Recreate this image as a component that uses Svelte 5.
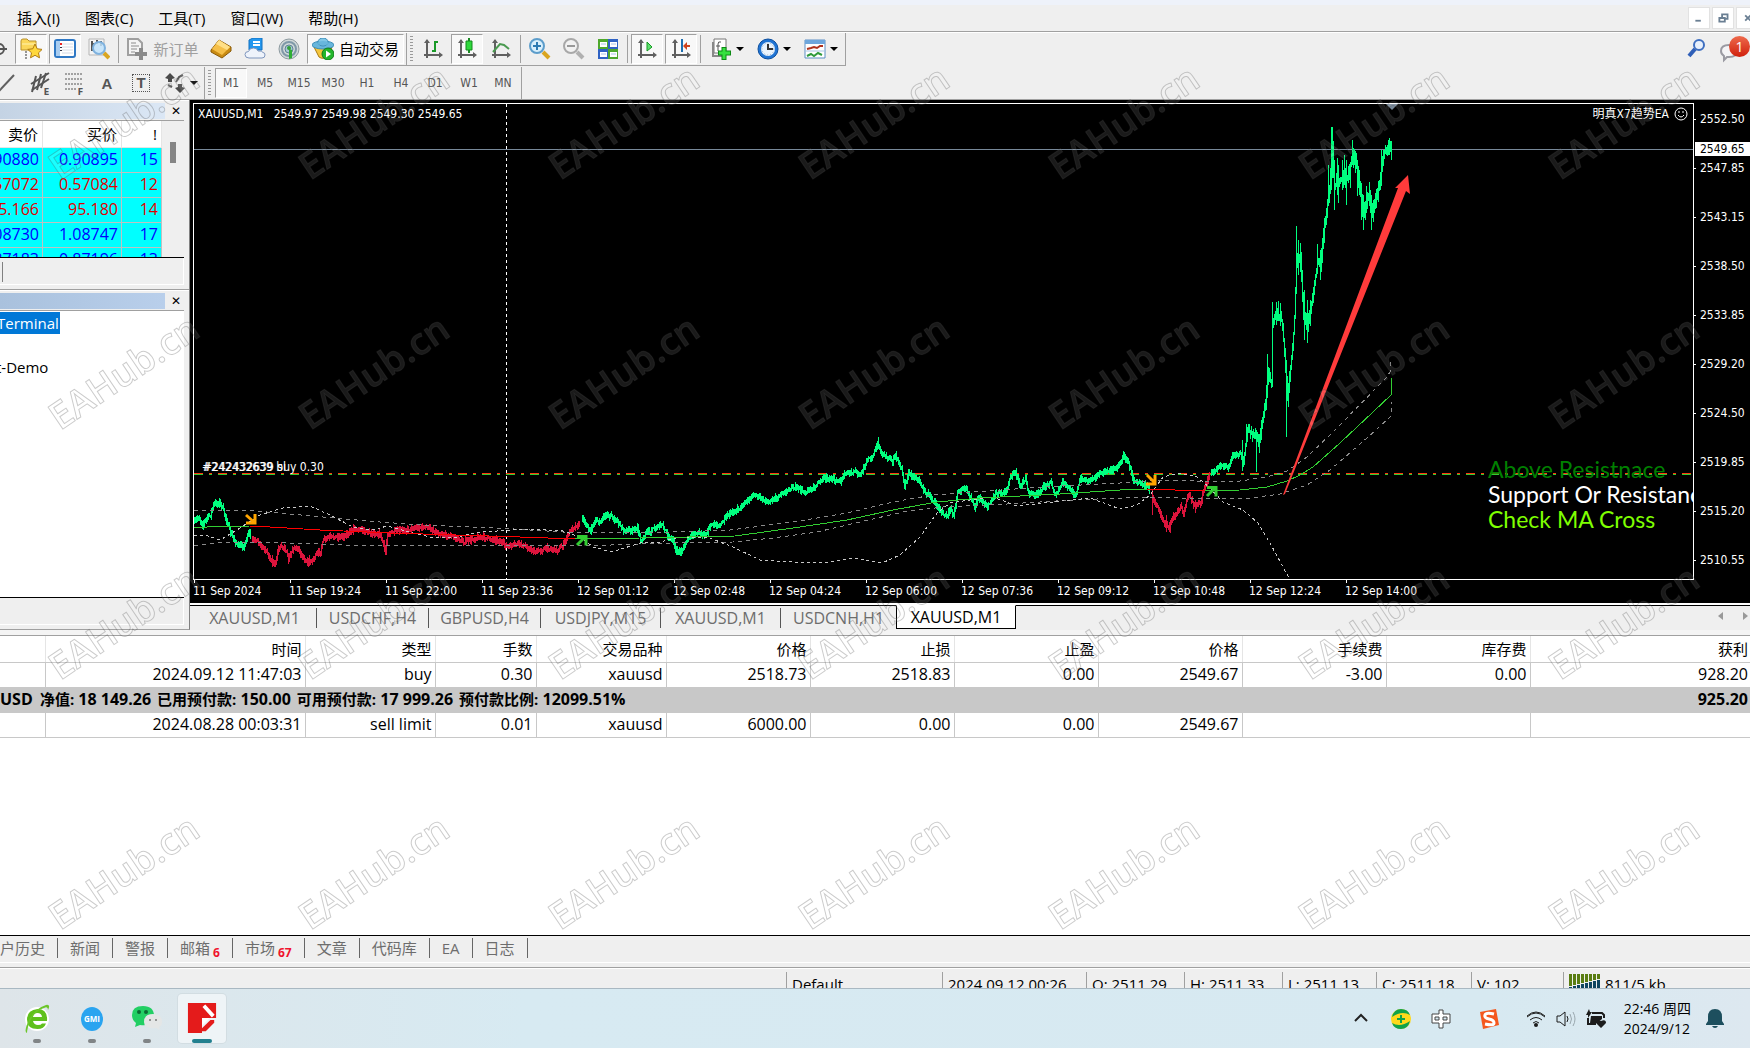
<script lang="ts">
    type Point = [number, number];

    const menus = ['插入(I)', '图表(C)', '工具(T)', '窗口(W)', '帮助(H)'];
    const periods = ['M1', 'M5', 'M15', 'M30', 'H1', 'H4', 'D1', 'W1', 'MN'];

    const quotes = [
        { bid: '0.90880', ask: '0.90895', spread: 15, up: true },
        { bid: '0.57072', ask: '0.57084', spread: 12, up: false },
        { bid: '95.166', ask: '95.180', spread: 14, up: false },
        { bid: '1.08730', ask: '1.08747', spread: 17, up: true },
        { bid: '0.87183', ask: '0.87196', spread: 13, up: true },
    ];

    const prices = ['2552.50', '2547.85', '2543.15', '2538.50', '2533.85', '2529.20', '2524.50', '2519.85', '2515.20', '2510.55'];
    const times = [
        '11 Sep 2024', '11 Sep 19:24', '11 Sep 22:00', '11 Sep 23:36', '12 Sep 01:12', '12 Sep 02:48', '12 Sep 04:24',
        '12 Sep 06:00', '12 Sep 07:36', '12 Sep 09:12', '12 Sep 10:48', '12 Sep 12:24', '12 Sep 14:00',
    ];

    const chartTabs = [
        { label: 'XAUUSD,M1', width: 124 },
        { label: 'USDCHF,H4', width: 112 },
        { label: 'GBPUSD,H4', width: 112 },
        { label: 'USDJPY,M15', width: 120 },
        { label: 'XAUUSD,M1', width: 120 },
        { label: 'USDCNH,H1', width: 115 },
        { label: 'XAUUSD,M1', width: 120 },
    ];
    let activeTab = $state(6);
    let period = $state('M1');

    const columns = [
        { title: '', width: 45 },
        { title: '时间', width: 260 },
        { title: '类型', width: 130 },
        { title: '手数', width: 101 },
        { title: '交易品种', width: 130 },
        { title: '价格', width: 144 },
        { title: '止损', width: 144 },
        { title: '止盈', width: 144 },
        { title: '价格', width: 144 },
        { title: '手续费', width: 144 },
        { title: '库存费', width: 144 },
        { title: '获利', width: 0 },
    ];
    const openOrder = ['', '2024.09.12 11:47:03', 'buy', '0.30', 'xauusd', '2518.73', '2518.83', '0.00', '2549.67', '-3.00', '0.00', '928.20'];
    const balance = [
        { label: '净值', value: '18 149.26' },
        { label: '已用预付款', value: '150.00' },
        { label: '可用预付款', value: '17 999.26' },
        { label: '预付款比例', value: '12099.51%' },
    ];
    const pendingOrder = ['', '2024.08.28 00:03:31', 'sell limit', '0.01', 'xauusd', '6000.00', '0.00', '0.00', '2549.67'];

    const panelTabs = [
        { label: '户历史' }, { label: '新闻' }, { label: '警报' }, { label: '邮箱', badge: 6 }, { label: '市场', badge: 67 },
        { label: '文章' }, { label: '代码库' }, { label: 'EA' }, { label: '日志' },
    ];

    const status = [
        { text: 'Default', width: 156 },
        { text: '2024.09.12 00:26', width: 144 },
        { text: 'O: 2511.29', width: 98 },
        { text: 'H: 2511.33', width: 98 },
        { text: 'L: 2511.13', width: 94 },
        { text: 'C: 2511.18', width: 95 },
        { text: 'V: 102', width: 92 },
    ];

    // price path, split where the trend colour flips
    const up = '#00ff7f';
    const down = '#dc143c';
    const series: { color: string; points: Point[] }[] = [
        { color: up, points: [[194, 522], [198, 517], [202, 525], [207, 517], [210, 515], [213, 505], [219, 502], [222, 508], [227, 523], [230, 533], [235, 542], [238, 546], [244, 546], [248, 532], [251, 536]] },
        { color: down, points: [[252, 541], [257, 540], [262, 547], [267, 553], [272, 564], [275, 562], [278, 548], [284, 547], [288, 560], [293, 547], [300, 553], [304, 560], [309, 563], [314, 557], [320, 551], [323, 540], [330, 537], [343, 536], [350, 532], [353, 527], [362, 530], [372, 533], [380, 535], [385, 552], [387, 534], [397, 531], [413, 528], [427, 527], [437, 533], [453, 537], [463, 542], [480, 537], [497, 540], [508, 547], [518, 543], [527, 548], [535, 552], [547, 548], [557, 550], [563, 545], [568, 533], [573, 527], [580, 524]] },
        { color: up, points: [[582, 520], [590, 530], [595, 520], [600, 522], [605, 514], [613, 518], [625, 532], [637, 528], [640, 541], [647, 532], [662, 525], [668, 537], [673, 540], [675, 550], [680, 553], [687, 538], [697, 532], [705, 535], [710, 525], [720, 525], [728, 515], [740, 507], [753, 495], [760, 498], [767, 502], [777, 497], [793, 487], [805, 492], [813, 488], [823, 477], [840, 482], [845, 473], [855, 472], [860, 475], [867, 460], [873, 455], [876, 446], [878, 444], [880, 452], [887, 457], [892, 462], [895, 455], [902, 472], [904, 486], [908, 473], [918, 480], [923, 490], [932, 500], [938, 508], [943, 515], [947, 516], [950, 508], [953, 516], [957, 492], [965, 488], [970, 497], [974, 507], [978, 497], [987, 507], [995, 493], [1005, 492], [1010, 477], [1015, 472], [1020, 487], [1025, 478], [1028, 493], [1037, 495], [1042, 488], [1050, 482], [1055, 496], [1062, 482], [1075, 495], [1080, 479], [1088, 480], [1097, 475], [1110, 470], [1117, 467], [1123, 456], [1128, 463], [1133, 480], [1140, 482], [1147, 487], [1150, 495]] },
        { color: down, points: [[1152, 500], [1158, 508], [1163, 522], [1168, 527], [1173, 517], [1180, 507], [1183, 513], [1188, 495], [1195, 507], [1200, 503], [1204, 487], [1210, 474]] },
        { color: up, points: [[1211, 474], [1213, 473], [1218, 465], [1228, 467], [1233, 454], [1240, 455], [1243, 462], [1247, 430], [1252, 434], [1255, 435], [1258, 445], [1262, 420], [1265, 402], [1268, 373], [1271, 383], [1272, 322], [1275, 317], [1280, 313], [1283, 340], [1286, 380], [1287, 400], [1292, 347], [1294, 317], [1296, 260], [1300, 257], [1303, 313], [1307, 327], [1312, 297], [1317, 260], [1320, 265], [1323, 233], [1327, 203], [1330, 177], [1332, 150], [1334, 187], [1337, 180], [1342, 180], [1347, 177], [1352, 157], [1356, 167], [1362, 207], [1363, 213], [1368, 193], [1372, 213], [1377, 193], [1380, 177], [1383, 153], [1388, 148], [1392, 149]] },
    ];

    // single bars that stand out of the crowd: x, high, low
    const spikes: { color: string; bars: [number, number, number][] }[] = [
        { color: up, bars: [[219, 498, 508], [878, 437, 448], [1123, 451, 460], [1242, 440, 471], [1246, 424, 442], [1256, 432, 472], [1267, 354, 390], [1272, 302, 340], [1276, 302, 325], [1278, 301, 320], [1280, 303, 326], [1286, 360, 437], [1296, 226, 268], [1298, 240, 275], [1300, 243, 272], [1304, 290, 340], [1307, 300, 343], [1310, 300, 326], [1317, 244, 274], [1320, 250, 280], [1328, 165, 195], [1331, 127, 190], [1332, 127, 178], [1334, 160, 210], [1337, 158, 195], [1338, 165, 203], [1342, 160, 190], [1344, 155, 185], [1346, 160, 205], [1350, 165, 188], [1352, 140, 165], [1357, 160, 196], [1358, 166, 180], [1361, 190, 220], [1363, 195, 230], [1366, 186, 212], [1369, 182, 206], [1371, 205, 230], [1373, 200, 222], [1381, 150, 186], [1389, 139, 153]] },
        { color: down, bars: [[272, 555, 567], [309, 555, 566], [353, 524, 535], [385, 545, 555], [1152, 490, 515], [1166, 515, 532], [1170, 520, 533], [1195, 500, 513]] },
    ];

    function barPath(points: Point[]) {
        let seed = 7;
        const random = () => {
            seed = (seed * 16807) % 2147483647;
            return seed / 2147483647;
        };
        let path = '';
        let last = points[0][1];
        for (let i = 1; i < points.length; i++) {
            const [x0, y0] = points[i - 1];
            const [x1, y1] = points[i];
            for (let x = x0; x < x1; x++) {
                const reach = x > 1320 ? 10 : x > 1245 ? 6 : 3;
                const y = y0 + ((y1 - y0) * (x - x0)) / (x1 - x0) + (random() - 0.5) * 3;
                const high = Math.min(y, last) - 1 - random() * reach;
                const low = Math.max(y, last) + 1 + random() * reach;
                path += `M${x + 0.5} ${Math.round(high)}V${Math.round(low)}`;
                last = y;
            }
        }
        return path;
    }

    const bars = series.map((part) => ({ color: part.color, d: barPath(part.points) }));
    const spikeBars = spikes.map((part) => ({
        color: part.color,
        d: part.bars.map(([x, high, low]) => `M${x + 0.5} ${high}V${low}`).join(''),
    }));

    const averages = [
        { color: '#32cd32', points: '194,528 207,527 250,526' },
        { color: '#ff0000', points: '250,526 270,527 320,530 390,533 520,537 575,539' },
        { color: '#32cd32', points: '575,539 640,538 735,536 793,528 847,520 893,510 937,502 980,498 1060,494 1120,490 1147,489' },
        { color: '#ff0000', points: '1147,489 1175,490 1205,491' },
        { color: '#32cd32', points: '1205,491 1240,490 1267,487 1287,481 1300,475 1313,467 1340,443 1373,412 1391,395 1391,378' },
    ];
    const bands = [
        '194,510 255,511 290,514 323,517 380,522 423,525 497,528 563,532 673,532 730,530 793,522 847,513 893,502 933,495 987,491 1043,487 1120,483 1157,480 1233,482 1267,477 1287,471 1307,457 1333,432 1387,377 1390,372 1391,358',
        '194,546 223,542 290,543 373,546 480,545 580,546 673,543 733,542 773,538 817,532 860,522 903,512 943,507 1007,504 1073,500 1147,497 1180,498 1243,499 1280,494 1307,485 1330,470 1367,438 1391,416 1391,402',
    ];
    const slowLine =
        '194,536 205,535 220,540 237,530 260,515 283,508 310,506 330,515 353,527 373,530 387,526 413,533 430,537 457,537 480,532 530,529 563,531 580,537 593,547 612,552 640,543 660,542 680,537 707,537 733,547 760,560 793,562 823,563 853,558 882,563 900,555 920,537 937,513 950,503 970,500 993,497 1017,506 1053,502 1090,498 1120,509 1137,505 1150,495 1163,477 1180,473 1197,477 1210,488 1223,502 1243,510 1258,523 1270,543 1289,578';

    const axes = '<path d="M5 2v18M2 17h17" stroke="#606060" stroke-width="2" fill="none"/><path d="M2 5l3-4 3 4zM17 14l4 3-4 3z" fill="#606060"/>';

    // all drawn on a 22 by 22 grid
    const icons: Record<string, string> = {
        crosshair: '<circle cx="11" cy="11" r="5" fill="none" stroke="#555" stroke-width="2"/><path d="M11 3v16M3 11h16" stroke="#555" stroke-width="2"/>',
        star: '<path d="M1 3q0-2 2-2h4l2 2h7v9H1z" fill="#fbd75a" stroke="#b8902a"/><path d="M2 6h14" stroke="#fff3b0"/><path d="M6 13v8" stroke="#333" stroke-dasharray="2 1"/><path d="M15 6l2.200 4.800 5 .6-3.700 3.400 1 5-4.500-2.500-4.500 2.500 1-5-3.700-3.400 5-.6z" fill="#ffd83d" stroke="#b07a10"/>',
        list: '<rect x="1" y="2" width="20" height="17" rx="2" fill="#fff" stroke="#2f78c4" stroke-width="2"/><path d="M2 3h4v15H2z" fill="#a9cdf0"/><path d="M8 6h11M8 9h11M8 12h11M8 15h11" stroke="#d4dbe6"/><path d="M6 5h2v2H6z" fill="#e22"/><path d="M6 9h2v1H6zM6 12h2v1H6z" fill="#334"/>',
        inspect: '<path d="M1 1h15v16H1z" fill="#f4f4f4" stroke="#b5b5b5"/><path d="M4 3v10M4 6h3M13 3v5M9 2v4" stroke="#555" stroke-width="2"/><circle cx="11" cy="10" r="6" fill="#bfe2fa" fill-opacity=".85" stroke="#7fb2de" stroke-width="2"/><path d="M16 15l5 5" stroke="#d9a520" stroke-width="4"/>',
        order: '<path d="M2 1h10l4 4v12H2z" fill="#f4f4f4" stroke="#a0a0a0" stroke-width="2"/><path d="M5 5h5M5 8h8M5 11h6M5 14h4" stroke="#8c8c8c"/><path d="M15 10v12M9 16h12" stroke="#8a8a8a" stroke-width="4"/>',
        gold: '<path d="M1 12L9 2l12 7v4l-9 7L1 14z" fill="#c98b12" stroke="#8a5a08"/><path d="M2 11l7-9 11 7-8 8z" fill="#f5bf48"/><path d="M9 2l11 7-3 3L6 6z" fill="#ffdf86"/>',
        cloud: '<path d="M5 2l4-2h9v12H5z" fill="#2497ee" stroke="#1070c0"/><path d="M9 4h7M9 7h7" stroke="#fff" stroke-width="2"/><path d="M5 20q-4 0-4-3.500 0-3 3.500-3 1-3.500 5-3.500 3.500 0 4.500 3 4-.5 5 1.500 2 0 2 2.500 0 3-3 3z" fill="#eef3fb" stroke="#7f96bd"/>',
        signal: '<circle cx="11" cy="11" r="10" fill="#d0d8d8" stroke="#8d9aa0"/><circle cx="11" cy="11" r="7" fill="none" stroke="#7f98a8" stroke-width="2"/><circle cx="11" cy="11" r="4" fill="#a9c7d8" stroke="#5f8296"/><path d="M11 21V11l3 1v8z" fill="#2fae35"/><circle cx="11" cy="10" r="2" fill="#35a03c"/>',
        robot: '<path d="M2 9h18l-4 9q-5 4-9 1z" fill="#f6c73e" stroke="#a97b12"/><ellipse cx="11" cy="7" rx="11" ry="4" fill="#68b6dc" stroke="#3b8db8"/><ellipse cx="11" cy="4" rx="5" ry="4" fill="#7fc6e6" stroke="#3b8db8"/><ellipse cx="11" cy="5" rx="5" ry="2" fill="#68b6dc"/><circle cx="16" cy="16" r="6" fill="#23b52b" stroke="#107a18"/><path d="M14 12.500v7l5-3.500z" fill="#fff"/>',
        barchart: axes + '<path d="M13 3v11M10 13h3M13 4h3" stroke="#1a9a28" stroke-width="2" fill="none"/>',
        candles: axes + '<path d="M13 0v15" stroke="#1a8a24" stroke-width="2"/><path d="M10 3h6v9h-6z" fill="#2fd83c" stroke="#128a1c"/>',
        linechart: axes + '<path d="M3 14l7-8 4 1 5 4" stroke="#4a9a50" stroke-width="2" fill="none"/>',
        zoomin: '<path d="M14 14l6 6" stroke="#d9a520" stroke-width="4"/><circle cx="8" cy="8" r="7" fill="#d8effc" stroke="#5c9dcb" stroke-width="2"/><path d="M4 8h8M8 4v8" stroke="#2d7ab2" stroke-width="2"/>',
        zoomout: '<path d="M14 14l6 6" stroke="#b0b0b0" stroke-width="4"/><circle cx="8" cy="8" r="7" fill="#f2f2f2" stroke="#a8a8a8" stroke-width="2"/><path d="M4 8h8" stroke="#999" stroke-width="2"/>',
        tile: '<path d="M1 1h10v10H1z" fill="#4ea82c"/><path d="M11 1h10v10H11z" fill="#2f62c4"/><path d="M1 11h10v10H1z" fill="#2f62c4"/><path d="M11 11h10v10H11z" fill="#4ea82c"/><path d="M3 4h7v5H3zM13 4h7v5h-7zM3 14h7v5H3zM13 14h7v5h-7z" fill="#fff"/><path d="M4 6h5M14 6h5M4 16h5M14 16h5" stroke="#a9c4e8"/>',
        scroll: axes + '<path d="M11 4v9l5-4z" fill="#5fe070" stroke="#149a20"/>',
        shift: axes + '<path d="M12 1v13" stroke="#1f6fb0" stroke-width="2"/><path d="M14 8h6" stroke="#d0421b" stroke-width="2"/><path d="M13 8l4-4v8z" fill="#d0421b"/>',
        indicator: '<path d="M4 1h12v14H4z" fill="#fff" stroke="#777"/><path d="M2 4h2v13h9v2H2z" fill="#888"/><path d="M11 4q-3-1-3 2v7M6 8h4" stroke="#555" fill="none"/><path d="M14 9v13M8 15h13" stroke="#0c8a14" stroke-width="5"/><path d="M14 10v11M9 15h11" stroke="#35e03e" stroke-width="3"/>',
        clock: '<circle cx="11" cy="11" r="10" fill="#1f74d4" stroke="#0d4f9e"/><circle cx="11" cy="11" r="7" fill="#eaf4fd"/><path d="M11 6v5h5" stroke="#333" stroke-width="2" fill="none"/><circle cx="11" cy="11" r="6" fill="none" stroke="#8da8c4" stroke-dasharray="1 2"/>',
        template: '<path d="M1 2h20v18H1z" fill="#fff" stroke="#5c8fc4"/><path d="M1 2h20v4H1z" fill="#6ea6dc"/><path d="M3 11l4-1 3-1 3 1 3-2 3 0" stroke="#b0321c" stroke-width="2" fill="none"/><path d="M1 13h20" stroke="#aac6e4"/><path d="M3 18l4-2 3 2 4-3 4 2" stroke="#2f9a3c" stroke-width="2" fill="none"/>',
        line: '<path d="M3 19L18 3" stroke="#606060" stroke-width="2"/>',
        channel: '<path d="M2 12L20 1M3 18L20 7" stroke="#555" stroke-width="2"/><path d="M7 4L3 20M12 2L8 18M17 1l-5 15" stroke="#555" stroke-width="2"/>',
        fibo: '<path d="M2 2h18M2 7h18M2 12h18M2 17h12" stroke="#555" stroke-dasharray="2 1" stroke-width="1"/>',
        marks: '<path d="M6 1l5 5-3 1v3H4V7L1 6zM16 21l-5-5 3-1v-3h4v3l3 1z" fill="#4a4a4a"/><path d="M4 13l4 2M12 10l3-5 4-2" stroke="#5a5a5a" stroke-width="2" fill="none"/>',
        search: '<circle cx="13" cy="8" r="5" fill="#e8f0fc" stroke="#3f6fc0" stroke-width="2"/><path d="M9 12l-6 7" stroke="#2f5fb8" stroke-width="4"/>',
    };
</script>

{#snippet icon(name: string)}
    <svg class="icon" viewBox="0 0 22 22" aria-hidden="true">{@html icons[name]}</svg>
{/snippet}

{#snippet tool(name: string, title: string, pressed = false)}
    <button class="tool" class:pressed aria-label={title}>{@render icon(name)}</button>
{/snippet}

{#snippet dropTool(name: string, title: string)}
    <button class="tool drop" aria-label={title}>{@render icon(name)}<span class="caret"></span></button>
{/snippet}

<div class="desktop">
    <div class="caption"></div>
    <nav class="menu">
        {#each menus as item}
            <button>{item}</button>
        {/each}
        <div class="window-buttons">
            <button aria-label="最小化"><svg viewBox="0 0 22 22"><path d="M7 14h6" stroke="#6a7f93" stroke-width="2" /></svg></button>
            <button aria-label="还原"><svg viewBox="0 0 22 22"><path d="M10 10V7h6v5h-3M7 11h6v4H7z" fill="none" stroke="#6a7f93" stroke-width="2" /></svg></button>
            <button aria-label="关闭"><svg viewBox="0 0 22 22"><path d="M9 8l6 6M15 8l-6 6" stroke="#6a7f93" stroke-width="2" /></svg></button>
        </div>
    </nav>

    <div class="toolbars">
        <div class="toolbar-lines">
            <div class="toolbar">
                <div class="clipped">{@render tool('crosshair', '十字准线')}</div>
                {@render tool('star', '导航', true)}
                {@render tool('list', '终端', true)}
                {@render tool('inspect', '数据窗口')}
                <span class="sep"></span>
                <button class="tool wide order" disabled>{@render icon('order')}新订单</button>
                {@render tool('gold', 'MetaEditor')}
                {@render tool('cloud', 'VPS')}
                {@render tool('signal', '信号')}
                <button class="tool wide pressed">{@render icon('robot')}自动交易</button>
                <span class="end"></span>
                <span class="grip"></span>
                {@render tool('barchart', '柱状图')}
                {@render tool('candles', '阴阳烛', true)}
                {@render tool('linechart', '折线图')}
                <span class="sep"></span>
                {@render tool('zoomin', '放大')}
                {@render tool('zoomout', '缩小')}
                {@render tool('tile', '平铺')}
                <span class="sep"></span>
                {@render tool('scroll', '自动滚动', true)}
                {@render tool('shift', '图表平移', true)}
                <span class="sep"></span>
                {@render dropTool('indicator', '指标')}
                {@render dropTool('clock', '周期')}
                {@render dropTool('template', '模板')}
                <span class="end"></span>
            </div>
            <div class="toolbar second">
                <div class="clipped line">{@render tool('line', '趋势线')}</div>
                <button class="tool lettered" aria-label="通道">{@render icon('channel')}<b>E</b></button>
                <button class="tool lettered" aria-label="斐波那契">{@render icon('fibo')}<b>F</b></button>
                <button class="tool letter">A</button>
                <button class="tool boxed"><span>T</span></button>
                {@render dropTool('marks', '箭头')}
                <span class="end"></span>
                <span class="grip"></span>
                {#each periods as p}
                    <button class="tool period" class:pressed={p === period} onclick={() => (period = p)}>{p}</button>
                {/each}
                <span class="end"></span>
            </div>
        </div>
        <div class="account-tools">
            <button aria-label="搜索">{@render icon('search')}</button>
            <button class="chat" aria-label="消息">
                <svg viewBox="0 0 30 26" aria-hidden="true">
                    <path d="M3 14q0-6 8-6t8 6-8 6H9l-3 3v-4q-3-2-3-5z" fill="#f4f4f6" stroke="#9a9aa2" stroke-width="2" />
                </svg>
                <span>1</span>
            </button>
        </div>
    </div>

    <div class="work">
        <aside>
            <section class="dock market">
                <header><div class="dock-title pale"></div><button aria-label="关闭">✕</button></header>
                <div class="quotes">
                    <table>
                        <thead>
                            <tr><th>卖价</th><th>买价</th><th>!</th></tr>
                        </thead>
                        <tbody>
                            {#each quotes as q}
                                <tr class:up={q.up}><td>{q.bid}</td><td>{q.ask}</td><td>{q.spread}</td></tr>
                            {/each}
                        </tbody>
                    </table>
                    <div class="scroll"><span></span></div>
                </div>
                <footer><span class="mark"></span></footer>
            </section>
            <section class="dock navigator">
                <header><div class="dock-title"></div><button aria-label="关闭">✕</button></header>
                <ul>
                    <li><span class="selected">Terminal</span></li>
                    <li></li>
                    <li>t-Demo</li>
                </ul>
                <footer></footer>
            </section>
        </aside>

        <main>
            <div class="chart">
                <div class="plot">
                    <svg class="drawing" aria-hidden="true">
                        <line x1="0" x2="100%" y1="45.5" y2="45.5" stroke="#778899" />
                        <line x1="312.5" x2="312.5" y1="0" y2="100%" stroke="#fff" stroke-dasharray="3 3" />
                        <line x1="0" x2="100%" y1="370.5" y2="370.5" stroke="#32cd32" stroke-dasharray="9 6 3 6" />
                        <line x1="0" x2="100%" y1="369.5" y2="369.5" stroke="#ff3a10" stroke-dasharray="9 6 3 6" />
                        <g transform="translate(-194 -104)" fill="none">
                            {#each bars as part}
                                <path d={part.d} stroke={part.color} shape-rendering="crispEdges" />
                            {/each}
                            {#each spikeBars as part}
                                <path d={part.d} stroke={part.color} shape-rendering="crispEdges" />
                            {/each}
                            {#each bands as points}
                                <polyline {points} stroke="#8a8a8a" stroke-dasharray="4 4" shape-rendering="crispEdges" />
                            {/each}
                            <polyline points={slowLine} stroke="#c8c8c8" stroke-dasharray="3 3" shape-rendering="crispEdges" />
                            {#each averages as line}
                                <polyline points={line.points} stroke={line.color} shape-rendering="crispEdges" />
                            {/each}
                            <path d="M246 515l9 8M255 514v9h-9" stroke="#ffa500" stroke-width="3" />
                            <path d="M1147 475l8 8M1155 475v9h-9" stroke="#ffa500" stroke-width="3" />
                            <path d="M577 545l8-8M577 536.500h9v9" stroke="#32cd32" stroke-width="3" />
                            <path d="M1207 496l8-8M1207 487.500h9v9" stroke="#32cd32" stroke-width="3" />
                            <path d="M1386 104h12l-6 6z" fill="#778899" />
                            <path d="M1283 495l115-307-3 0 13-13 2 19-4-3L1285 494z" fill="#ff3b3b" />
                        </g>
                    </svg>
                    <span class="quote-line">XAUUSD,M1&nbsp;&nbsp; 2549.97 2549.98 2549.30 2549.65</span>
                    <span class="expert">明真X7趋势EA
                        <svg viewBox="0 0 16 16"><circle cx="8" cy="8" r="6" /><path d="M5 9q3 4 6 0M6 5v2M10 5v2" /></svg>
                    </span>
                    <span class="order-label">#242432639 buy 0.30</span>
                    <span class="order-label shade">#242432639 sl</span>
                    <div class="hints">
                        <p class="above">Above Resistnace</p>
                        <p>Support Or Resistance</p>
                        <p class="cross">Check MA Cross</p>
                    </div>
                </div>
                <div class="price-axis">
                    {#each prices as price}
                        <span>{price}</span>
                    {/each}
                    <b>2549.65</b>
                </div>
                <div class="time-axis">
                    {#each times as time}
                        <span>{time}</span>
                    {/each}
                </div>
            </div>
            <div class="chart-tabs">
                {#each chartTabs as tab, i}
                    <button class:active={i === activeTab} class:before={i === activeTab - 1} style:width="{tab.width}px" onclick={() => (activeTab = i)}>{tab.label}</button>
                {/each}
                <div class="pager"><i></i><i class="next"></i></div>
            </div>
        </main>
    </div>

    <section class="trade">
        <table>
            <colgroup>
                {#each columns as column}
                    <col style:width={column.width ? `${column.width}px` : 'auto'} />
                {/each}
            </colgroup>
            <thead>
                <tr>
                    {#each columns as column}
                        <th>{column.title}</th>
                    {/each}
                </tr>
            </thead>
            <tbody>
                <tr>
                    {#each openOrder as cell}
                        <td>{cell}</td>
                    {/each}
                </tr>
                <tr class="balance">
                    <td colspan="11">
                        <span>USD</span>
                        {#each balance as item}
                            <span><small>{item.label}:</small> {item.value}</span>
                        {/each}
                    </td>
                    <td>925.20</td>
                </tr>
                <tr>
                    {#each pendingOrder as cell}
                        <td>{cell}</td>
                    {/each}
                    <td colspan="2"></td>
                    <td></td>
                </tr>
            </tbody>
        </table>
    </section>

    <nav class="panel-tabs">
        {#each panelTabs as tab}
            <button>{tab.label}{#if tab.badge}<b>{tab.badge}</b>{/if}</button>
        {/each}
    </nav>

    <div class="status">
        {#each status as cell}
            <span style:width="{cell.width}px">{cell.text}</span>
        {/each}
        <span class="traffic">
            <svg viewBox="0 0 31 20" aria-hidden="true">
                {#each [0, 1, 2, 3, 4, 5, 6, 7] as n}
                    <rect x={n * 4} y="0" width="3" height={12 - n} fill="#5a7d12" />
                    <rect x={n * 4} y={13 - n} width="3" height={7 + n} fill="#0f4560" />
                {/each}
            </svg>
            811/5 kb
        </span>
    </div>

    <div class="taskbar">
        <div class="apps">
            <button aria-label="浏览器">
                <svg viewBox="0 0 30 30">
                    <circle cx="15" cy="16" r="12" fill="#fff" />
                    <path d="M25 18H11q1 4 5 4 3 0 4-1.500h4q-2 5.500-8.500 5.500Q5 26 5 16.500T15.500 6Q26 6 25 18zM11 14h9q-.5-4-4.500-4T11 14z" fill="#5fc01c" fill-rule="evenodd" />
                    <path d="M5 30Q1 29 8 15 14 5 24 2q5-1 2 5 0-4-4-2Q10 9 6 24q-1 4-1 6z" fill="#6cc62a" />
                </svg>
                <i></i>
            </button>
            <button aria-label="GMI">
                <svg viewBox="0 0 30 30">
                    <ellipse cx="15" cy="16" rx="11" ry="12" fill="#2aa4f0" />
                    <text x="15" y="19" text-anchor="middle">GMI</text>
                </svg>
                <i></i>
            </button>
            <button aria-label="微信">
                <svg viewBox="0 0 30 30">
                    <path d="M11 3Q0 3 0 12q0 5 4 8l-1 4 5-2q13 2 14-9Q22 3 11 3z" fill="#22cf64" />
                    <circle cx="7" cy="9" r="2" fill="#0b6b34" /><circle cx="14" cy="9" r="2" fill="#0b6b34" />
                    <path d="M21 11q9 0 9 8 0 4-3 5l1 3-4-2q-12 1-12-6 0-8 9-8z" fill="#e4e6e6" />
                    <circle cx="18" cy="17" r="1" fill="#777" /><circle cx="24" cy="17" r="1" fill="#777" />
                </svg>
                <i></i>
            </button>
            <button class="current" aria-label="MT4">
                <svg viewBox="0 0 30 32">
                    <path d="M0 0h30v16H15v16H0z" fill="#e41b1b" />
                    <path d="M17 3l10 11" stroke="#fff" stroke-width="4" />
                    <path d="M15 16h8l-8 8z" fill="#fff" /><path d="M28 18v3l-9 9h-4v-3l9-9z" fill="#e41b1b" />
                </svg>
                <i></i>
            </button>
        </div>
        <div class="tray">
            <svg class="chevron" viewBox="0 0 20 20"><path d="M4 12l6-6 6 6" fill="none" stroke="#222" stroke-width="2" /></svg>
            <svg class="guard" viewBox="0 0 20 20">
                <circle cx="10" cy="10" r="10" fill="#ffd91c" />
                <path d="M1 8Q3 0 10 0t9 6q-8-5-18 2zM19 12q-2 8-9 8t-9-6q8 5 18-2z" fill="#12a34a" />
                <path d="M10 6v8M6 10h8" stroke="#12a34a" stroke-width="2" />
            </svg>
            <svg class="ime" viewBox="0 0 20 20"><path d="M8 1h4v4h7v9h-7v5H8v-5H1V5h7zM4 8v3h4V8zM12 8v3h4V8z" fill="#fff" stroke="#444" fill-rule="evenodd" /></svg>
            <svg class="sogou" viewBox="0 0 20 20">
                <path d="M1 3l16-3 3 16-16 4z" fill="#f4581e" />
                <path d="M15 5q-8-2-9 1t4 4 5 4-9 1" fill="none" stroke="#fff" stroke-width="3" />
            </svg>
            <svg class="wifi" viewBox="0 0 20 20"><path d="M1 8q9-8 18 0M4 11q6-5 12 0M7 14q3-3 6 0" fill="none" stroke="#1c1c1c" /><path d="M1 7q9-8 18 0" fill="none" stroke="#1c1c1c" /><circle cx="10" cy="16" r="2" fill="#1c1c1c" /></svg>
            <svg class="sound" viewBox="0 0 20 20"><path d="M1 7v6h3l5 4V3L4 7z" fill="none" stroke="#1c1c1c" /><path d="M11 7q2 3 0 6" fill="none" stroke="#1c1c1c" /><path d="M14 5q3 5 0 10M17 3q4 7 0 14" fill="none" stroke="#9aa7ae" /></svg>
            <svg class="battery" viewBox="0 0 20 20"><path d="M6 4h10l2 2v3M2 9v6h8" fill="none" stroke="#1c1c1c" stroke-width="2" /><path d="M3 0l-3 6h2v3l4-6H4zM5 7h11v3l-5 4H4z" fill="#1c1c1c" /><path d="M15 19l-5-5q0-4 5-2 5-2 5 2z" fill="#1c1c1c" /></svg>
            <time>22:46 周四<br />2024/9/12</time>
            <svg class="bell" viewBox="0 0 20 20"><path d="M3 8q0-8 7-8t7 8v4l2 3v1H1v-1l2-3zM7 17h6q-1 2-3 2t-3-2z" fill="#1d4f5e" /></svg>
        </div>
    </div>

    <svg class="watermark" aria-hidden="true">
        <defs>
            <pattern id="mark" width="250" height="250" patternUnits="userSpaceOnUse">
                <text transform="translate(60 181) rotate(-34)">EAHub.cn</text>
            </pattern>
        </defs>
        <rect width="100%" height="100%" fill="url(#mark)" />
    </svg>
</div>

<style>
    :global(body) {
        margin: 0;
        background: #efefef;
    }

    .desktop {
        position: relative;
        display: flex;
        flex-direction: column;
        min-height: 100vh;
        overflow: hidden;
        background: #efefef;
        color: #000;
        font: 15px/20px 'Open Sans', 'Noto Sans CJK SC', sans-serif;
    }

    button {
        padding: 0;
        border: 0;
        background: none;
        color: inherit;
        font: inherit;
    }

    table {
        border-collapse: collapse;
        table-layout: fixed;
    }

    .caption {
        height: 5px;
        background: #eef2fa;
    }

    .menu {
        display: flex;
        align-items: center;
        gap: 25px;
        height: 26px;
        padding-left: 17px;
        border-bottom: 1px solid #a0a0a0;
        overflow: hidden;
    }

    .window-buttons {
        display: flex;
        gap: 2px;
        margin-left: auto;
        margin-right: -8px;
    }

    .window-buttons button {
        width: 22px;
        height: 22px;
        background: #fff;
        border: 1px solid #e2e2e2;
        box-sizing: border-box;
    }

    .window-buttons svg {
        display: block;
        width: 20px;
        height: 20px;
    }

    .toolbars {
        display: flex;
        justify-content: space-between;
        border-top: 1px solid #fff;
        border-bottom: 1px solid #a0a0a0;
    }

    .toolbar {
        display: flex;
        align-items: center;
        width: max-content;
        height: 32px;
        border-bottom: 1px solid #a0a0a0;
    }

    .toolbar.second {
        height: 32px;
        padding-top: 1px;
        border-bottom: 0;
    }

    .icon {
        width: 22px;
        height: 22px;
        flex: none;
    }

    .tool {
        display: flex;
        align-items: center;
        justify-content: center;
        box-sizing: border-box;
        width: 32px;
        height: 30px;
        margin: 0 1px;
        border: 1px solid transparent;
        flex: none;
    }

    .tool.pressed {
        background: #f8f8f8;
        border-color: #a0a0a0 #fff #fff #a0a0a0;
    }

    .tool.wide {
        width: 97px;
        gap: 5px;
    }

    .tool.order {
        width: 83px;
        margin: 0;
        color: #a0a0a0;
    }

    .tool.drop {
        width: 45px;
        gap: 4px;
    }

    .second .tool.drop {
        width: 43px;
    }

    .caret {
        border: 4px solid transparent;
        border-top-color: #000;
        border-bottom: 0;
    }

    .clipped {
        display: flex;
        justify-content: flex-end;
        width: 14px;
        overflow: hidden;
    }

    .clipped .tool {
        margin-right: -1px;
    }

    .clipped.line {
        width: 22px;
    }

    .sep {
        width: 1px;
        height: 28px;
        margin: 0 2px;
        background: #a0a0a0;
    }

    .end {
        width: 1px;
        height: 100%;
        margin-left: 1px;
        background: #a0a0a0;
    }

    .grip {
        width: 3px;
        height: 26px;
        margin: 0 3px;
        background: repeating-linear-gradient(#9a9a9a 0 1px, #efefef 1px 3px);
    }

    .second .tool {
        color: #555;
        font: 12px 'DejaVu Sans Condensed', sans-serif;
    }

    .lettered b {
        align-self: flex-end;
        margin-left: -7px;
        font-size: 9px;
    }

    .second .letter {
        font: bold 15px 'Liberation Sans', sans-serif;
    }

    .boxed span {
        width: 16px;
        border: 1px dotted #555;
        font: bold 15px/16px 'Liberation Sans', sans-serif;
    }

    .account-tools {
        display: flex;
        align-items: flex-start;
        gap: 10px;
        padding-top: 4px;
        overflow: hidden;
    }

    .account-tools .icon {
        display: block;
    }

    .chat {
        position: relative;
        width: 32px;
    }

    .chat svg {
        display: block;
        width: 30px;
        height: 26px;
    }

    .chat span {
        position: absolute;
        top: -1px;
        right: 0;
        width: 21px;
        height: 21px;
        border-radius: 11px;
        background: linear-gradient(#ee6a4c, #d0200c);
        color: #fff;
        font-size: 14px;
        line-height: 21px;
        text-align: center;
    }

    .work {
        display: flex;
    }

    aside {
        display: flex;
        flex-direction: column;
        box-sizing: border-box;
        width: 190px;
        border-right: 1px solid #808080;
        border-bottom: 1px solid #a0a0a0;
        flex: none;
    }

    .dock {
        display: flex;
        flex-direction: column;
        padding: 2px 5px 4px 0;
        border-top: 1px solid #fff;
    }

    .market {
        border-bottom: 1px solid #a0a0a0;
    }

    .navigator {
        flex: 1;
    }

    .dock header {
        display: flex;
        height: 16px;
        padding-bottom: 1px;
        border-bottom: 1px solid #a0a0a0;
    }

    .dock-title {
        flex: 1;
        background: linear-gradient(90deg, #a9c1dd, #b9cfeb);
    }

    .dock-title.pale {
        background: linear-gradient(90deg, #c4d3e4, #dbe7f5);
    }

    .dock header button {
        width: 19px;
        padding-left: 3px;
        box-sizing: border-box;
        font-size: 12px;
        line-height: 16px;
    }

    .quotes {
        display: flex;
        justify-content: flex-end;
        height: 136px;
        overflow: hidden;
        border-bottom: 1px solid #000;
    }

    .quotes table {
        width: 198px;
        height: max-content;
        flex: none;
        text-align: right;
    }

    .quotes th {
        box-sizing: border-box;
        width: 79px;
        height: 26px;
        padding: 0 4px 0 0;
        background: #fff;
        border: solid #e5e5e5;
        border-width: 0 1px 1px 0;
        font-weight: normal;
    }

    .quotes th:last-child {
        width: 40px;
    }

    .quotes td {
        box-sizing: border-box;
        height: 25px;
        padding: 0 3px 1px 0;
        background: #0ff;
        border: 1px solid #c0c0c0;
        border-width: 0 1px 1px 0;
        color: #e00000;
        font-size: 16px;
    }

    .quotes .up td {
        color: #0000ff;
    }

    .scroll {
        width: 22px;
        padding-top: 21px;
        flex: none;
    }

    .scroll span {
        display: block;
        width: 6px;
        height: 21px;
        margin: 0 auto;
        background: #858585;
    }

    .dock footer {
        height: 26px;
        border: solid #fff;
        border-width: 0 1px 1px 0;
    }

    .mark {
        display: block;
        width: 1px;
        height: 20px;
        margin: 4px 2px;
        background: #808080;
    }

    .navigator ul {
        flex: 1;
        margin: 0;
        padding: 1px 0 0;
        overflow: hidden;
        background: #fff;
        border-bottom: 1px solid #000;
        list-style: none;
        line-height: 22px;
    }

    .navigator li {
        height: 22px;
        margin-left: -4px;
    }

    .selected {
        display: inline-block;
        padding: 0 1px;
        background: #0078d7;
        color: #fff;
    }

    main {
        display: flex;
        flex-direction: column;
        flex: 1;
        min-width: 0;
    }

    .chart {
        display: grid;
        grid-template: 477px 23px / minmax(0, 1fr) 56px;
        padding: 3px 0 0 3px;
        background: #000;
        color: #fff;
        font: 12px/16px 'DejaVu Sans Condensed', 'Noto Sans CJK SC', sans-serif;
    }

    .plot {
        position: relative;
        border: 1px solid #fff;
        overflow: hidden;
    }

    .drawing {
        display: block;
        width: 100%;
        height: 100%;
    }

    .quote-line,
    .expert,
    .order-label {
        position: absolute;
        top: 2px;
        left: 4px;
        white-space: nowrap;
    }

    .expert {
        display: flex;
        align-items: center;
        gap: 4px;
        left: auto;
        right: 4px;
    }

    .expert svg {
        width: 16px;
        height: 16px;
        fill: none;
        stroke: #fff;
    }

    .order-label {
        top: 355px;
        left: 8px;
    }

    .order-label.shade {
        left: 9px;
    }

    .hints {
        position: absolute;
        top: 353px;
        right: 0;
        width: 205px;
        overflow: hidden;
        font: 23px/25px Lato, sans-serif;
        white-space: nowrap;
    }

    .hints p {
        margin: 0;
    }

    .hints .above {
        color: #008000;
    }

    .hints .cross {
        color: #7fff00;
    }

    .price-axis {
        position: relative;
        padding-top: 8px;
    }

    .price-axis span {
        display: flex;
        align-items: center;
        gap: 4px;
        height: 16px;
        margin-bottom: 33px;
    }

    .price-axis span::before {
        content: '';
        width: 2px;
        height: 1px;
        background: #fff;
    }

    /* last price sits on top of the scale */
    .price-axis b {
        position: absolute;
        top: 39px;
        left: 1px;
        right: 0;
        padding-left: 5px;
        background: #fff;
        color: #000;
        font-weight: normal;
        line-height: 14px;
    }

    .time-axis {
        display: flex;
        overflow: hidden;
    }

    .time-axis span {
        width: 96px;
        padding-top: 3px;
        flex: none;
        white-space: nowrap;
        background: linear-gradient(#fff, #fff) 1px 0 / 1px 3px no-repeat;
    }

    .chart-tabs {
        display: flex;
        height: 24px;
        padding-left: 3px;
        border-top: 1px solid #000;
        box-shadow: 0 -2px #fff;
        margin-top: 2px;
        color: #6d6d6d;
        font-size: 16px;
    }

    .chart-tabs button {
        height: 20px;
        margin-top: 2px;
        box-sizing: border-box;
        border-right: 1px solid #555;
        flex: none;
    }

    .chart-tabs .before {
        border-right: 0;
    }

    .chart-tabs .active {
        height: 24px;
        margin-top: -1px;
        background: #fff;
        border: 1px solid #000;
        border-top-color: #fff;
        color: #000;
    }

    .pager {
        display: flex;
        gap: 20px;
        margin: 6px 2px 0 auto;
    }

    .pager i {
        border: 4px solid transparent;
        border-right: 5px solid #999;
        border-left: 0;
        height: 0;
    }

    .pager .next {
        border-left: 5px solid #999;
        border-right: 0;
    }

    .trade {
        flex: 1;
        margin-top: 5px;
        background: #fff;
        border-top: 1px solid #a0a0a0;
        border-bottom: 1px solid #000;
        box-shadow: 0 -5px #f4f4f4;
    }

    .trade table {
        width: 100%;
    }

    .trade th {
        height: 26px;
        padding: 0 3px;
        box-sizing: border-box;
        border-right: 1px solid #e5e5e5;
        border-bottom: 1px solid #c8c8c8;
        font-weight: normal;
        text-align: right;
    }

    .trade td {
        height: 25px;
        padding: 0 3px 2px;
        box-sizing: border-box;
        border-right: 1px solid #c8c8c8;
        border-bottom: 1px solid #c8c8c8;
        font-size: 16px;
        text-align: right;
        white-space: nowrap;
    }

    .trade th:last-child,
    .trade td:last-child {
        padding-right: 2px;
        border-right: 0;
    }

    .trade .balance td {
        border-right: 0;
        background: #c8c8c8;
        font-weight: bold;
    }

    .trade .balance td:first-child {
        padding-left: 0;
        text-align: left;
    }

    .balance span {
        margin-right: 3px;
    }

    .balance span + span {
        margin-right: 6px;
    }

    .balance small {
        font-size: 15px;
    }

    .panel-tabs {
        display: flex;
        align-items: flex-start;
        height: 26px;
        border-bottom: 1px solid #fff;
        color: #6d6d6d;
    }

    .panel-tabs button {
        height: 20px;
        margin-top: 2px;
        padding: 0 12px;
        border-right: 1px solid #666;
    }

    .panel-tabs button:first-child {
        padding-left: 0;
    }

    .panel-tabs b {
        position: relative;
        top: 3px;
        margin-left: 3px;
        color: #f0142d;
        font-size: 12px;
    }

    .status {
        display: flex;
        justify-content: flex-end;
        height: 20px;
        margin-top: 4px;
        border-top: 1px solid #a0a0a0;
        box-shadow: inset 0 1px #fff;
        overflow: hidden;
    }

    .status span {
        box-sizing: border-box;
        margin-top: 4px;
        padding: 2px 0 0 5px;
        border-left: 1px solid #a0a0a0;
        flex: none;
        white-space: nowrap;
    }

    .status .traffic {
        display: flex;
        gap: 5px;
        width: 187px;
    }

    .traffic svg {
        width: 31px;
        height: 20px;
        flex: none;
    }

    .taskbar {
        display: flex;
        justify-content: space-between;
        align-items: center;
        height: 59px;
        border-top: 1px solid #a9b8c2;
        background: linear-gradient(90deg, #dee5e9, #d7eaf2 30%, #d7e9f1 85%, #dde8f0);
    }

    .apps {
        display: flex;
        gap: 7px;
        padding-left: 13px;
    }

    .apps button {
        display: flex;
        flex-direction: column;
        align-items: center;
        justify-content: space-between;
        box-sizing: border-box;
        width: 48px;
        height: 49px;
        padding-top: 9px;
        border-radius: 4px;
    }

    .apps svg {
        width: 30px;
        height: 30px;
    }

    .apps text {
        fill: #fff;
        font: bold 8px 'Open Sans', sans-serif;
    }

    .apps i {
        width: 8px;
        height: 4px;
        border-radius: 2px;
        background: #808486;
    }

    .apps .current {
        background: #eef4f7;
        box-shadow: 0 0 0 1px #d2dde2;
    }

    .apps .current i {
        width: 20px;
        background: #22808f;
    }

    .tray {
        display: flex;
        align-items: center;
        padding-right: 25px;
    }

    .tray svg {
        width: 20px;
        height: 20px;
        margin-right: 20px;
    }

    .tray .ime {
        margin-right: 28px;
    }

    .tray .sogou {
        margin-right: 27px;
    }

    .tray .wifi,
    .tray .sound {
        margin-right: 10px;
    }

    .tray .battery {
        margin-right: 18px;
    }

    .tray time {
        font-size: 14px;
        margin-right: 14px;
    }

    .tray .bell {
        margin-right: 0;
    }

    .watermark {
        position: absolute;
        top: 0;
        left: 0;
        width: 100%;
        height: 100%;
        pointer-events: none;
    }

    .watermark text {
        fill: rgba(255, 255, 255, 0.1);
        stroke: rgba(70, 70, 70, 0.28);
        font: 600 37px 'Open Sans', sans-serif;
    }
</style>
